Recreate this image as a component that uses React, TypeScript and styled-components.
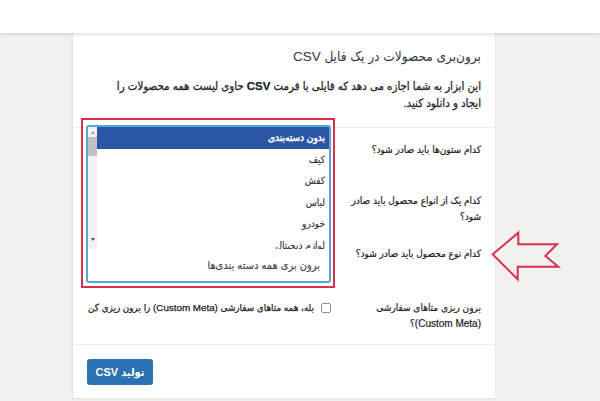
import React from "react";
import styled, { createGlobalStyle } from "styled-components";

const GlobalStyle = createGlobalStyle`
  html, body {
    margin: 0;
    padding: 0;
  }
  body {
    background: #f1f1f1;
    font-family: "Liberation Sans", "DejaVu Sans Condensed", "DejaVu Sans", sans-serif;
    color: #23282d;
  }
  * {
    box-sizing: border-box;
  }
`;

const options = ["بدون دسته‌بندی", "کیف", "کفش", "لباس", "خودرو", "لوازم دیجیتال"];

function App() {
  return (
    <>
      <GlobalStyle />
      <Page>
        <TopBar />
        <Main>
          <Card>
            <Header>
              <Title>برون‌بری محصولات در یک فایل CSV</Title>
              <Description>
                این ابزار به شما اجازه می دهد که فایلی با فرمت <b>CSV</b> حاوی لیست همه محصولات را
                ایجاد و دانلود کنید.
              </Description>
            </Header>

            <FormTable>
              <Label>کدام ستون‌ها باید صادر شود؟</Label>
              <Label>کدام یک از انواع محصول باید صادر شود؟</Label>
              <Label>کدام نوع محصول باید صادر شود؟</Label>

              <Highlight>
                <Dropdown>
                  <ListArea>
                    <OptionList>
                      {options.map((opt, i) => (
                        <Option key={opt} $active={i === 0}>
                          {opt}
                        </Option>
                      ))}
                    </OptionList>
                    <Scrollbar>
                      <ArrowUp />
                      <Thumb />
                      <Track />
                      <ArrowDown />
                    </Scrollbar>
                  </ListArea>
                  <SearchArea>برون بری همه دسته بندی‌ها</SearchArea>
                </Dropdown>
              </Highlight>

              <Label>برون ریزی متاهای سفارشی (Custom Meta)؟</Label>
              <CheckRow>
                <Checkbox />
                <CheckText>بله، همه متاهای سفارشی (Custom Meta) را برون ریزی کن</CheckText>
              </CheckRow>
            </FormTable>

            <Footer>
              <PrimaryButton>تولید CSV</PrimaryButton>
            </Footer>

            <Pointer width="72" height="54" viewBox="0 0 72 54">
              <polygon
                points="3.7,25.3 29.3,3.7 29.3,15.3 68,15.3 56.3,27 69.3,37.7 28.7,37.7 28.7,50.3"
                fill="none"
                stroke="#d8304d"
                strokeWidth="2"
                strokeLinejoin="miter"
              />
            </Pointer>
          </Card>
        </Main>
      </Page>
    </>
  );
}

export default App;

const Page = styled.div`
  width: 600px;
  height: 401px;
  overflow: hidden;
`;

const TopBar = styled.div`
  position: relative;
  z-index: 3;
  height: 33px;
  background: #fff;
  box-shadow: 0 1px 4px rgba(0, 0, 0, 0.16);
`;

const Main = styled.main`
  padding-left: 72px;
`;

const Card = styled.section`
  position: relative;
  width: 423px;
  height: 365px;
  background: #fff;
  border-left: 1px solid #e4e4e4;
  box-shadow: 0 1px 2px rgba(0, 0, 0, 0.08);
  direction: rtl;
`;

const Header = styled.div`
  padding: 14px 14px 15px;
`;

const Title = styled.h2`
  margin: 0;
  font-size: 13.5px;
  line-height: 20px;
  font-weight: normal;
  color: #32373c;
`;

const Description = styled.p`
  max-width: 380px;
  margin: 11px 0 0;
  font-size: 11.4px;
  line-height: 17px;
  color: #1d2327;
  -webkit-text-stroke: 0.25px #1d2327;

  b {
    font-weight: bold;
  }
`;

const FormTable = styled.div`
  display: grid;
  grid-template-columns: 138px 245px;
  grid-template-rows: 51px 53px 54px 58px;
  column-gap: 12px;
  padding: 0 14px;
  border-top: 1px solid #efefef;
`;

const Label = styled.div`
  grid-column: 1;
  padding-top: 14px;
  font-size: 10px;
  line-height: 16px;
  color: #1d2327;
  -webkit-text-stroke: 0.2px #1d2327;
`;

const Highlight = styled.div`
  grid-column: 2;
  grid-row: 1 / 4;
  align-self: start;
  position: relative;
  z-index: 1;
  margin: -10px -4px 0 -5px;
  padding: 5px 2px 3px 3px;
  border: 2px solid #d8304d;
  background: #fff;
`;

const Dropdown = styled.div`
  height: 158px;
  border: 2px solid #55a5d7;
  border-radius: 3px;
  display: flex;
  flex-direction: column;
  overflow: hidden;
`;

const ListArea = styled.div`
  height: 122px;
  display: flex;
  overflow: hidden;
`;

const OptionList = styled.ul`
  flex: 1;
  margin: 0;
  padding: 0;
  list-style: none;
`;

const Option = styled.li<{ $active?: boolean }>`
  padding-right: 4px;
  font-size: 10px;
  line-height: 21.6px;
  color: ${(p) => (p.$active ? "#fff" : "#333")};
  -webkit-text-stroke: ${(p) => (p.$active ? "0.45px #fff" : "0.15px #333")};
  background: ${(p) => (p.$active ? "#2c56a6" : "transparent")};
`;

const Scrollbar = styled.div`
  width: 9px;
  display: flex;
  flex-direction: column;
  align-items: center;
  background: #f1f1f1;
`;

const ArrowUp = styled.div`
  margin: 4px 0 3px;
  width: 0;
  height: 0;
  border-left: 2.5px solid transparent;
  border-right: 2.5px solid transparent;
  border-bottom: 3px solid #a3a3a3;
`;

const ArrowDown = styled.div`
  margin: 3px 0 8px;
  width: 0;
  height: 0;
  border-left: 2.5px solid transparent;
  border-right: 2.5px solid transparent;
  border-top: 3px solid #505050;
`;

const Thumb = styled.div`
  width: 9px;
  height: 19px;
  background: #c1c1c1;
`;

const Track = styled.div`
  flex: 1;
`;

const SearchArea = styled.div`
  flex: 1;
  display: flex;
  align-items: center;
  padding-right: 9px;
  font-size: 11px;
  color: #444;
  -webkit-text-stroke: 0.15px #444;
`;

const CheckRow = styled.div`
  grid-column: 2;
  grid-row: 4;
  display: flex;
  align-items: center;
  gap: 7px;
  padding-top: 14px;
  height: 30px;
`;

const Checkbox = styled.span`
  flex: none;
  width: 10px;
  height: 10px;
  border: 1px solid #8c8f94;
  border-radius: 2px;
  background: #fff;
`;

const CheckText = styled.span`
  font-size: 9.8px;
  line-height: 16px;
  color: #1d2327;
  -webkit-text-stroke: 0.25px #1d2327;
  white-space: nowrap;
`;

const Footer = styled.div`
  display: flex;
  justify-content: flex-end;
  padding: 14px;
  border-top: 1px solid #efefef;
`;

const PrimaryButton = styled.button`
  width: 66px;
  height: 26px;
  border: none;
  border-radius: 3px;
  background: #2a70b2;
  color: #fff;
  font-family: "Liberation Sans", "DejaVu Sans Condensed", "DejaVu Sans", sans-serif;
  font-size: 11px;
  font-weight: bold;
  padding: 0;
  direction: rtl;
`;

const Pointer = styled.svg`
  position: absolute;
  left: 416px;
  top: 196px;
  overflow: visible;
`;
